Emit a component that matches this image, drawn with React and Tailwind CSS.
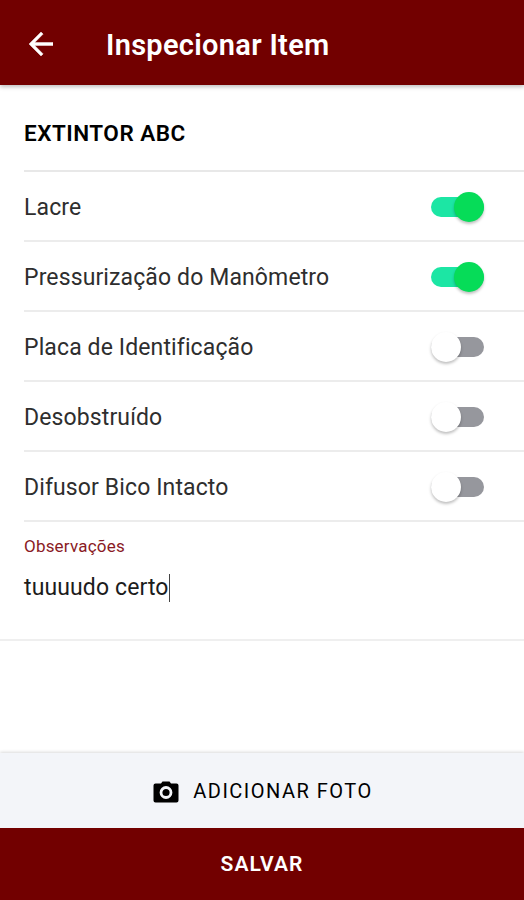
import React from 'react';

const items = [
  { label: 'Lacre', checked: true },
  { label: 'Pressurização do Manômetro', checked: true },
  { label: 'Placa de Identificação', checked: false },
  { label: 'Desobstruído', checked: false },
  { label: 'Difusor Bico Intacto', checked: false },
];

function Toggle({ checked }) {
  return (
    <div className={`flex items-center mt-px w-[53px] h-5 rounded-full ${checked ? 'justify-end bg-[#1ce6a4]' : 'justify-start bg-[#96979d]'}`}>
      <div
        className={`size-[30px] shrink-0 rounded-full shadow-[0_2px_3px_rgba(0,0,0,0.25)] ${checked ? 'bg-[#06dc58]' : 'bg-white'}`}
      />
    </div>
  );
}

function Header() {
  return (
    <header className="relative flex items-center h-[85px] pt-1 pl-[29px] bg-[#720000] text-white shadow-[0_2px_4px_rgba(0,0,0,0.25)]">
      <svg viewBox="4 4 16 16" className="size-6 -mt-0.5" fill="currentColor" stroke="currentColor" strokeWidth="0.3">
        <path d="M20 11H7.83l5.59-5.59L12 4l-8 8 8 8 1.41-1.41L7.83 13H20v-2z" />
      </svg>
      <h1 className="ml-[53px] text-[29px] leading-10 font-semibold tracking-[0.3px]">Inspecionar Item</h1>
    </header>
  );
}

export default function App() {
  return (
    <div className="flex flex-col w-[524px] h-[900px] overflow-hidden bg-white text-[#1c1c1c] font-['Roboto',sans-serif]">
      <Header />
      <main className="flex-1">
        <div className="ml-6 flex items-center h-[87px] pt-3 border-b-2 border-[#e8e8e8]">
          <h2 className="text-[22.5px] font-semibold tracking-[0.5px] text-black">EXTINTOR ABC</h2>
        </div>
        {items.map((item) => (
          <div key={item.label} className="ml-6 pr-10 flex items-center justify-between h-[70px] border-b-2 border-[#ececec]">
            <span className="pt-1 text-[23px] tracking-[0.12px] text-[#2e2e2e]">{item.label}</span>
            <Toggle checked={item.checked} />
          </div>
        ))}
        <div className="h-[119px] pl-6 pt-3 border-b-2 border-[#efefef]">
          <div className="text-[17px] leading-6 tracking-[0.2px] text-[#8a1a24]">Observações</div>
          <div className="flex items-center mt-4 h-7 text-[23px]">
            <span className="tracking-[0.12px]">tuuuudo certo</span>
            <span className="w-px h-7 bg-[#444]" />
          </div>
        </div>
      </main>
      <footer>
        <button className="flex items-center justify-center w-full h-[75px] pt-px pl-0.5 bg-[#f3f5f9] text-black shadow-[0_-1px_3px_rgba(0,0,0,0.15)]">
          <svg viewBox="0 0 26 22" className="w-[26px] h-[22px] mt-0.5">
            <path d="M2.5 2.5h5.5l1.5-2h7l1.5 2h5.5a2 2 0 0 1 2 2v15a2 2 0 0 1-2 2h-21a2 2 0 0 1-2-2v-15a2 2 0 0 1 2-2z" fill="#000" />
            <circle cx="13" cy="11.5" r="5" fill="none" stroke="#f3f5f9" strokeWidth="2.8" />
          </svg>
          <span className="ml-[14px] text-[20px] tracking-[1.5px]">ADICIONAR FOTO</span>
        </button>
        <button className="flex items-center justify-center w-full h-[72px] pt-px bg-[#720000] text-white text-[21px] font-semibold tracking-[1.1px]">
          SALVAR
        </button>
      </footer>
    </div>
  );
}
